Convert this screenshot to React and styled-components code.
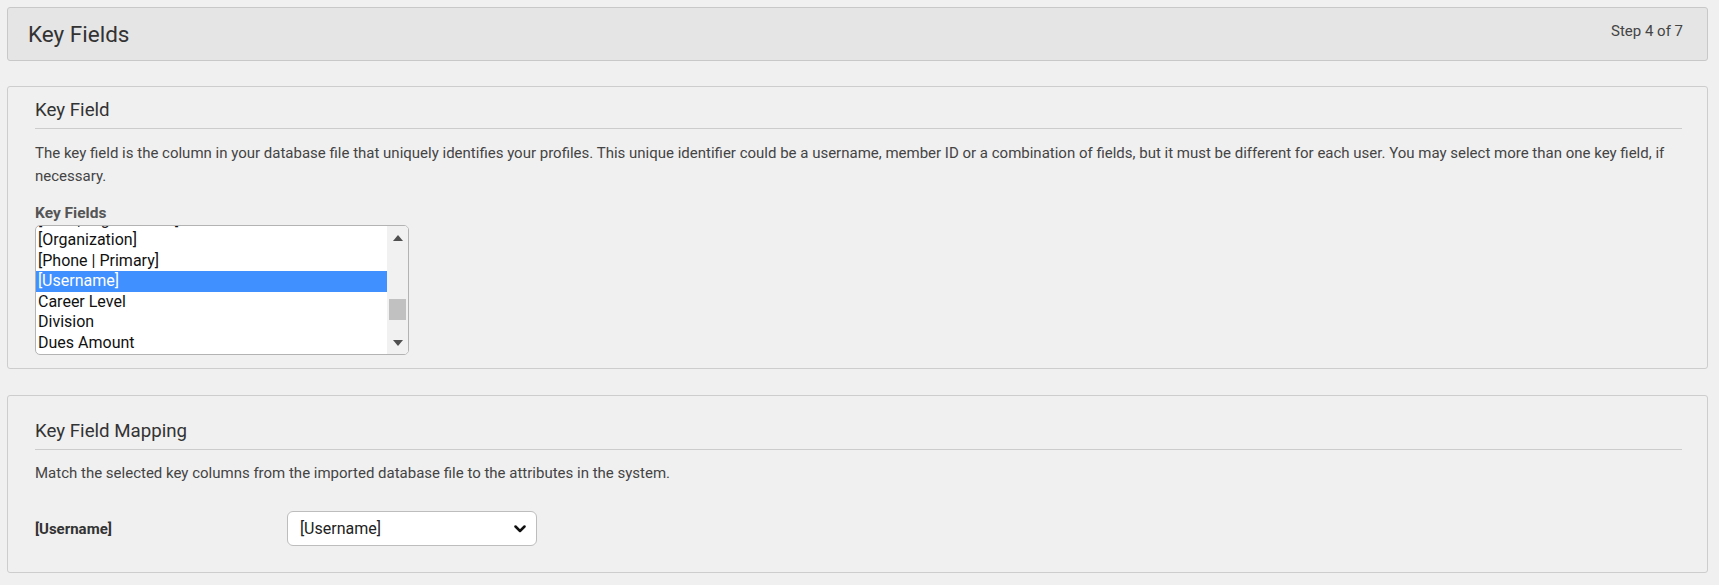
import React from 'react';
import styled, { createGlobalStyle } from 'styled-components';

const GlobalStyle = createGlobalStyle`
  html, body { margin: 0; padding: 0; background: #f0f0f0; }
  body { font-family: Roboto, "Liberation Sans", Arial, sans-serif; color: #444; }
  * { box-sizing: border-box; }
`;

const Page = styled.div`
  display: flex;
  flex-direction: column;
  padding: 7px 11px 11px 7px;
`;

const Header = styled.header`
  height: 54px;
  display: flex;
  align-items: center;
  justify-content: space-between;
  padding: 0 24px 0 20px;
  background: #e5e5e5;
  border: 1px solid #c8c8c8;
  border-radius: 3px;
  margin-bottom: 25px;
`;

const PageTitle = styled.h1`
  margin: 0;
  font-size: 22.5px;
  line-height: 26px;
  font-weight: 400;
  color: #333;
`;

const StepText = styled.span`
  align-self: flex-start;
  margin-top: 14px;
  font-size: 15px;
  line-height: 18px;
  color: #444;
`;

const Panel = styled.section`
  border: 1px solid #cdcdcd;
  border-radius: 3px;
  padding: ${p => p.$top}px 25px ${p => p.$bottom}px 27px;
  margin-bottom: 26px;
`;

const Legend = styled.h2`
  margin: 0;
  font-size: 18.7px;
  line-height: 23px;
  font-weight: 400;
  color: #333;
  padding-bottom: 6px;
  border-bottom: 1px solid #cccccc;
`;

const Text = styled.p`
  margin: ${p => p.$gap}px 0 0;
  font-size: 15px;
  line-height: 23px;
  color: #444;
`;

const FieldLabel = styled.label`
  display: block;
  margin-top: 15px;
  font-size: 15.5px;
  line-height: 20px;
  font-weight: 700;
  color: #555;
`;

const ListBox = styled.div`
  margin-top: 2px;
  width: 374px;
  height: 130px;
  display: flex;
  background: #fff;
  border: 1px solid #b3b3b3;
  border-radius: 5px;
  overflow: hidden;
`;

const OptionsViewport = styled.div`
  flex: 1;
  overflow: hidden;
`;

const OptionList = styled.ul`
  list-style: none;
  margin: ${p => p.$offset}px 0 0;
  padding: 0;
`;

const Option = styled.li`
  height: 20.6px;
  line-height: 20.6px;
  padding: 0 2px;
  font-size: 16px;
  white-space: nowrap;
  background: ${p => (p.$selected ? '#4190ff' : 'transparent')};
  color: ${p => (p.$selected ? '#fff' : '#111')};
`;

const ScrollBar = styled.div`
  width: 21px;
  background: #f1f1f1;
  display: flex;
  flex-direction: column;
`;

const ScrollButton = styled.div`
  height: 23px;
  display: flex;
  align-items: center;
  justify-content: center;
`;

const Track = styled.div`
  flex: 1;
  padding-top: ${p => p.$offset}px;
`;

const Thumb = styled.div`
  height: 21px;
  margin: 0 2px;
  background: #c1c1c1;
`;

const MappingRow = styled.div`
  margin-top: 26px;
  display: grid;
  grid-template-columns: 252px 250px;
  align-items: center;
`;

const RowLabel = styled.span`
  font-size: 15px;
  font-weight: 700;
  color: #333;
`;

const SelectWrap = styled.div`
  position: relative;
  width: 250px;
`;

const Select = styled.select`
  appearance: none;
  -webkit-appearance: none;
  width: 100%;
  height: 35px;
  padding: 0 32px 0 12px;
  font-family: Roboto, "Liberation Sans", Arial, sans-serif;
  font-size: 16px;
  color: #222;
  background: #fff;
  border: 1px solid #bdbdbd;
  border-radius: 6px;
  outline: none;
`;

const Chevron = styled.svg`
  position: absolute;
  right: 11px;
  top: 50%;
  transform: translateY(-50%);
  pointer-events: none;
`;

const Arrow = ({ up }) => (
  <svg width="10" height="6" viewBox="0 0 10 6">
    <polygon points={up ? '0,6 10,6 5,0' : '0,0 10,0 5,6'} fill="#505050" />
  </svg>
);

const options = [
  '[Mail | Organization]',
  '[Organization]',
  '[Phone | Primary]',
  '[Username]',
  'Career Level',
  'Division',
  'Dues Amount',
  'Email Opt Out',
];

export default function App() {
  return (
    <>
      <GlobalStyle />
      <Page>
        <Header>
          <PageTitle>Key Fields</PageTitle>
          <StepText>Step 4 of 7</StepText>
        </Header>

        <Panel $top={12} $bottom={13}>
          <Legend>Key Field</Legend>
          <Text $gap={13}>
            The key field is the column in your database file that uniquely identifies your profiles. This unique
            identifier could be a username, member ID or a combination of fields, but it must be different for each
            user. You may select more than one key field, if necessary.
          </Text>
          <FieldLabel>Key Fields</FieldLabel>
          <ListBox role="listbox" aria-multiselectable="true">
            <OptionsViewport>
              <OptionList $offset={-16.5}>
                {options.map(o => (
                  <Option key={o} $selected={o === '[Username]'}>{o}</Option>
                ))}
              </OptionList>
            </OptionsViewport>
            <ScrollBar>
              <ScrollButton><Arrow up /></ScrollButton>
              <Track $offset={50}><Thumb /></Track>
              <ScrollButton><Arrow /></ScrollButton>
            </ScrollBar>
          </ListBox>
        </Panel>

        <Panel $top={24} $bottom={26}>
          <Legend>Key Field Mapping</Legend>
          <Text $gap={12}>Match the selected key columns from the imported database file to the attributes in the system.</Text>
          <MappingRow>
            <RowLabel>[Username]</RowLabel>
            <SelectWrap>
              <Select defaultValue="[Username]">
                <option>[Username]</option>
                <option>[Organization]</option>
                <option>[Phone | Primary]</option>
              </Select>
              <Chevron width="12" height="8" viewBox="0 0 12 8">
                <polyline points="1.5,1.5 6,6 10.5,1.5" fill="none" stroke="#111" strokeWidth="2.5" strokeLinecap="round" strokeLinejoin="round" />
              </Chevron>
            </SelectWrap>
          </MappingRow>
        </Panel>
      </Page>
    </>
  );
}
